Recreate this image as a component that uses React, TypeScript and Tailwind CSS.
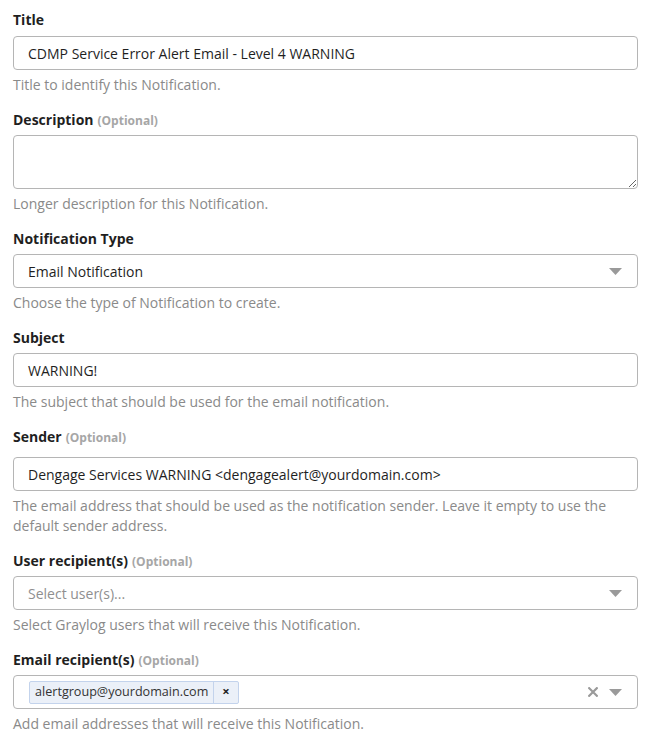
import React from "react";

const font = { fontFamily: '"Open Sans", "Noto Sans", sans-serif' };

function Label({ text, optional }: { text: string; optional?: boolean }) {
  return (
    <div className="h-5 leading-5 text-[14px] font-bold text-[#1f1f1f]">
      {text}
      {optional && <span className="ml-1 text-[12px] font-bold text-[#a6a6a6]">(Optional)</span>}
    </div>
  );
}

function Help({ children }: { children: React.ReactNode }) {
  return <div className="mt-[5px] text-[14px] leading-5 text-[#8a8a8a]">{children}</div>;
}

function Caret() {
  return (
    <svg width="13" height="7" viewBox="0 0 13 7" className="shrink-0">
      <path d="M0 0 L13 0 L6.5 7 Z" fill="#9a9a9a" />
    </svg>
  );
}

function Cross() {
  return (
    <svg width="10" height="10" viewBox="0 0 10 10" className="shrink-0">
      <path d="M1.2 1.2 L8.8 8.8 M8.8 1.2 L1.2 8.8" stroke="#9a9a9a" strokeWidth="2.2" strokeLinecap="square" />
    </svg>
  );
}

const boxCls =
  "h-[34px] w-full rounded-[4px] border border-[#b5b5b5] bg-white px-[14px] flex items-center text-[14px] text-[#1f1f1f]";

export default function App() {
  return (
    <div className="w-[646px] bg-white pt-[10px] pl-[13px] pr-[8px]" style={font}>
      {/* Title */}
      <div className="mb-[15px]">
        <Label text="Title" />
        <div className={boxCls + " mt-[6px]"}>CDMP Service Error Alert Email - Level 4 WARNING</div>
        <Help>Title to identify this Notification.</Help>
      </div>

      {/* Description */}
      <div className="mb-[15px]">
        <Label text="Description" optional />
        <textarea
          className="mt-[5px] block h-[54px] w-full resize-y rounded-[4px] border border-[#b5b5b5] bg-white px-[14px] py-[6px] text-[14px] outline-none"
          style={font}
        />
        <Help>Longer description for this Notification.</Help>
      </div>

      {/* Notification Type */}
      <div className="mb-[15px]">
        <Label text="Notification Type" />
        <div className={boxCls + " mt-[5px] justify-between pr-[15px]"}>
          <span>Email Notification</span>
          <Caret />
        </div>
        <Help>Choose the type of Notification to create.</Help>
      </div>

      {/* Subject */}
      <div className="mb-[15px]">
        <Label text="Subject" />
        <div className={boxCls + " mt-[5px]"}>WARNING!</div>
        <Help>The subject that should be used for the email notification.</Help>
      </div>

      {/* Sender */}
      <div className="mb-[15px]">
        <Label text="Sender" optional />
        <div className={boxCls + " mt-[10px]"}>Dengage Services WARNING &lt;dengagealert@yourdomain.com&gt;</div>
        <Help>
          The email address that should be used as the notification sender. Leave it empty to use the default sender
          address.
        </Help>
      </div>

      {/* User recipients */}
      <div className="mb-[15px]">
        <Label text="User recipient(s)" optional />
        <div className={boxCls + " mt-[5px] justify-between pr-[15px]"}>
          <span className="text-[#8f8f8f]">Select user(s)...</span>
          <Caret />
        </div>
        <Help>Select Graylog users that will receive this Notification.</Help>
      </div>

      {/* Email recipients */}
      <div className="mb-[13px]">
        <Label text="Email recipient(s)" optional />
        <div className={boxCls + " mt-[5px] justify-between pl-[15px] pr-[15px]"}>
          <div className="flex h-[23px] items-stretch rounded-[2px] border border-[#c3d3ec] bg-[#ebf0f8] text-[12.6px] text-[#333]">
            <span className="flex w-[183px] items-center px-[5px]">alertgroup@yourdomain.com</span>
            <span className="flex w-[25px] items-center justify-center border-l border-[#c3d3ec] text-[13px] font-bold text-[#222]">
              ×
            </span>
          </div>
          <div className="flex items-center gap-[11px]">
            <Cross />
            <Caret />
          </div>
        </div>
        <Help>Add email addresses that will receive this Notification.</Help>
      </div>
    </div>
  );
}
